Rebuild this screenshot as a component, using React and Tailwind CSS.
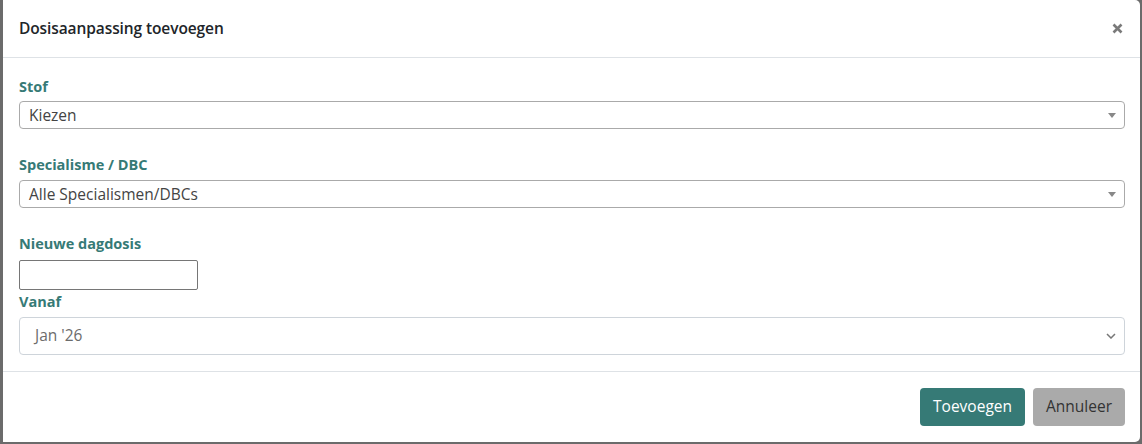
export default function App() {
  const font = { fontFamily: '"Open Sans", "Noto Sans", sans-serif' };
  return (
    <div className="w-[1142px] h-[444px] bg-[#6b6b6b] pl-[3px] pr-[2px] overflow-hidden" style={font}>
      <div className="bg-white h-[442px] rounded-br-[5px] rounded-tr-[5px] flex flex-col">
        <div className="h-[58px] border-b border-[#dee2e6] flex items-center justify-between pl-[16px] pr-[16px]">
          <div className="text-[15.5px] font-semibold text-[#212529] tracking-[-0.1px]">Dosisaanpassing toevoegen</div>
          <svg width="11" height="11" viewBox="0 0 11 11" className="mr-[1px]">
            <path d="M1.5 1.5 L9.5 9.5 M9.5 1.5 L1.5 9.5" stroke="#7a7a7a" strokeWidth="2.6" strokeLinecap="butt" />
          </svg>
        </div>
        <div className="pl-[16px] pr-[15px] pt-[19px] flex flex-col">
          <div className="text-[14.5px] font-bold text-[#367a76] leading-[20px] h-[24px]">Stof</div>
          <div className="h-[28px] border border-[#aaaaaa] rounded-[4px] flex items-center justify-between pl-[9px] pr-[8px]">
            <span className="text-[15.5px] text-[#444] pt-[1px]">Kiezen</span>
            <svg width="8" height="5" viewBox="0 0 8 5"><path d="M0 0 L8 0 L4 5 Z" fill="#888" /></svg>
          </div>
          <div className="h-[26px]" />
          <div className="text-[14.5px] font-bold text-[#367a76] leading-[20px] h-[25px]">Specialisme / DBC</div>
          <div className="h-[28px] border border-[#aaaaaa] rounded-[4px] flex items-center justify-between pl-[9px] pr-[8px]">
            <span className="text-[15.5px] text-[#444] pt-[1px]">Alle Specialismen/DBCs</span>
            <svg width="8" height="5" viewBox="0 0 8 5"><path d="M0 0 L8 0 L4 5 Z" fill="#888" /></svg>
          </div>
          <div className="h-[26px]" />
          <div className="text-[14.5px] font-bold text-[#367a76] leading-[20px] h-[26px]">Nieuwe dagdosis</div>
          <div className="w-[179px] h-[30px] border border-[#767676] rounded-[2px]" />
          <div className="text-[14.5px] font-bold text-[#367a76] leading-[20px] h-[27px] pt-[2px]">Vanaf</div>
          <div className="h-[38px] border border-[#ced4da] rounded-[4px] flex items-center justify-between pl-[15px] pr-[8px]">
            <span className="text-[15.5px] text-[#6c6c6c]">Jan '26</span>
            <svg width="10" height="6" viewBox="0 0 10 6"><path d="M1 1 L5 5 L9 1" fill="none" stroke="#777" strokeWidth="1.5" /></svg>
          </div>
        </div>
        <div className="mt-[16px] border-t border-[#dee2e6] flex justify-end gap-[8px] pr-[15px] pt-[16px]">
          <button className="h-[38px] px-[13px] rounded-[4px] bg-[#367a76] text-white text-[15.5px]">Toevoegen</button>
          <button className="h-[38px] px-[13px] rounded-[4px] bg-[#aaaaaa] text-[#333] text-[15.5px]">Annuleer</button>
        </div>
      </div>
    </div>
  );
}
